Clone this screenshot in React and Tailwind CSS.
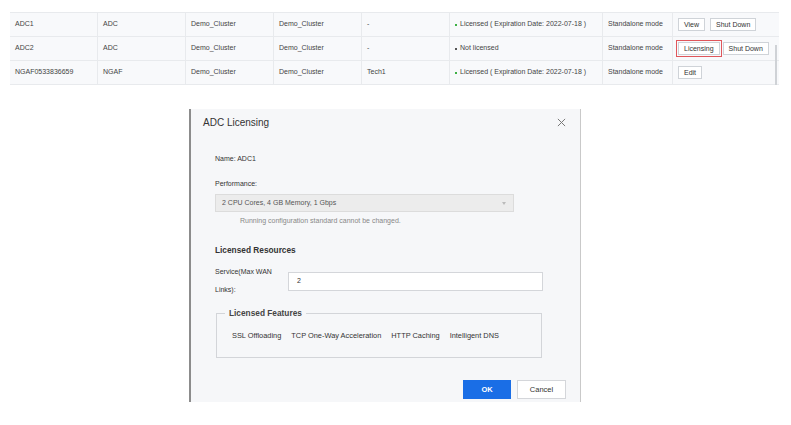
import React from "react";

const font = { fontFamily: '"Liberation Sans", Arial, sans-serif' };

function Btn({ children, className = "" }) {
  return (
    <span
      className={
        "inline-flex h-[13px] items-center border border-[#cfd3d8] bg-white px-[5px] text-[7px] leading-none text-[#333] " +
        className
      }
    >
      {children}
    </span>
  );
}

function Cell({ w, children, last }) {
  return (
    <div
      className={
        "flex h-full items-center px-[5px] text-[7px] text-[#444] " +
        (last ? "" : "border-r border-[#e8eaed]")
      }
      style={w ? { width: w } : { flex: 1 }}
    >
      {children}
    </div>
  );
}

function Status({ ok }) {
  return (
    <span className="flex items-center gap-[3px]">
      <span className={"h-[2px] w-[2px] " + (ok ? "bg-[#3cb043]" : "bg-[#555]")} />
      {ok ? "Licensed ( Expiration Date: 2022-07-18 )" : "Not licensed"}
    </span>
  );
}

function Row({ name, type, tag, ok, actions }) {
  return (
    <div className="flex h-[24px] border-b border-[#e8eaed] bg-[#f8f9fb]">
      <Cell w={88}>{name}</Cell>
      <Cell w={88}>{type}</Cell>
      <Cell w={88}>Demo_Cluster</Cell>
      <Cell w={88}>Demo_Cluster</Cell>
      <Cell w={88}>{tag}</Cell>
      <Cell w={153}>
        <Status ok={ok} />
      </Cell>
      <Cell w={70}>Standalone mode</Cell>
      <Cell last>{actions}</Cell>
    </div>
  );
}

export default function App() {
  return (
    <div className="min-h-[425px] w-[791px] bg-white" style={font}>
      <div className="relative ml-[10px] w-[769px] pt-[12px]">
        <div className="border-t border-[#e8eaed]">
          <Row
            name="ADC1"
            type="ADC"
            tag="-"
            ok
            actions={
              <div className="flex items-center gap-[5px]">
                <Btn>View</Btn>
                <Btn>Shut Down</Btn>
              </div>
            }
          />
          <Row
            name="ADC2"
            type="ADC"
            tag="-"
            ok={false}
            actions={
              <div className="-ml-[2px] flex items-center gap-[1px]">
                <span className="border border-[#e0565b] p-[1px]">
                  <Btn>Licensing</Btn>
                </span>
                <Btn>Shut Down</Btn>
              </div>
            }
          />
          <Row
            name="NGAF0533836659"
            type="NGAF"
            tag="Tech1"
            ok
            actions={<Btn>Edit</Btn>}
          />
        </div>
        <div className="absolute right-[2px] top-[45px] h-[40px] w-[2px] bg-[#cfd2d6]" />
      </div>

      <div className="ml-[189px] mt-[24px] h-[293px] w-[392px] border-l-2 border-r border-l-[#8c8c8c] border-r-[#c9c9c9] bg-[#f6f7f9] text-[#333]">
        <div className="flex h-[27px] items-center justify-between pl-[12px] pr-[14px]">
          <span className="text-[10px] text-[#333]">ADC Licensing</span>
          <svg width="9" height="9" viewBox="0 0 10 10" className="text-[#777]">
            <path d="M1 1L9 9M9 1L1 9" stroke="currentColor" strokeWidth="1.1" />
          </svg>
        </div>
        <div className="pl-[24px] pr-[37px]">
          <div className="mt-[18px] h-[10px] text-[7px] leading-[10px]">Name: ADC1</div>
          <div className="mt-[15px] h-[10px] text-[7px] leading-[10px]">Performance:</div>
          <div className="mt-[5px] flex h-[18px] w-[299px] items-center justify-between border border-[#dcdcdc] bg-[#ececec] pl-[6px] pr-[7px] text-[7px] text-[#555]">
            <span>2 CPU Cores, 4 GB Memory, 1 Gbps</span>
            <span className="h-0 w-0 border-x-[2.5px] border-t-[3px] border-x-transparent border-t-[#bbb]" />
          </div>
          <div className="mt-[4px] h-[10px] pl-[25px] text-[7px] leading-[10px] text-[#888]">
            Running configuration standard cannot be changed.
          </div>
          <div className="mt-[18px] h-[12px] text-[8.3px] font-bold leading-[12px] text-[#333]">
            Licensed Resources
          </div>
          <div className="mt-[7px] flex items-center">
            <div className="w-[73px] pr-[8px] text-[7px] leading-[18px]">Service(Max WAN Links):</div>
            <div className="flex h-[19px] flex-1 items-center border border-[#d4d6da] bg-white pl-[8px] text-[7px]">
              2
            </div>
          </div>
          <fieldset className="ml-[1px] mt-[8px] w-[326px] border border-[#d3d5d9] px-[15px] pb-[16px] pt-[12px]">
            <legend className="-ml-[7px] px-[4px] text-[8.3px] font-semibold leading-[12px] text-[#444]">
              Licensed Features
            </legend>
            <div className="flex h-[10px] items-center gap-[10px] text-[7.4px] text-[#333]">
              <span>SSL Offloading</span>
              <span>TCP One-Way Acceleration</span>
              <span>HTTP Caching</span>
              <span>Intelligent DNS</span>
            </div>
          </fieldset>
        </div>
        <div className="mt-[22px] flex justify-end gap-[6px] pr-[14px]">
          <span className="flex h-[19px] w-[48px] items-center justify-center bg-[#1a6ee6] text-[7.5px] font-bold text-white">
            OK
          </span>
          <span className="flex h-[19px] w-[49px] items-center justify-center border border-[#d4d6da] bg-white text-[7.5px] text-[#333]">
            Cancel
          </span>
        </div>
      </div>
    </div>
  );
}
